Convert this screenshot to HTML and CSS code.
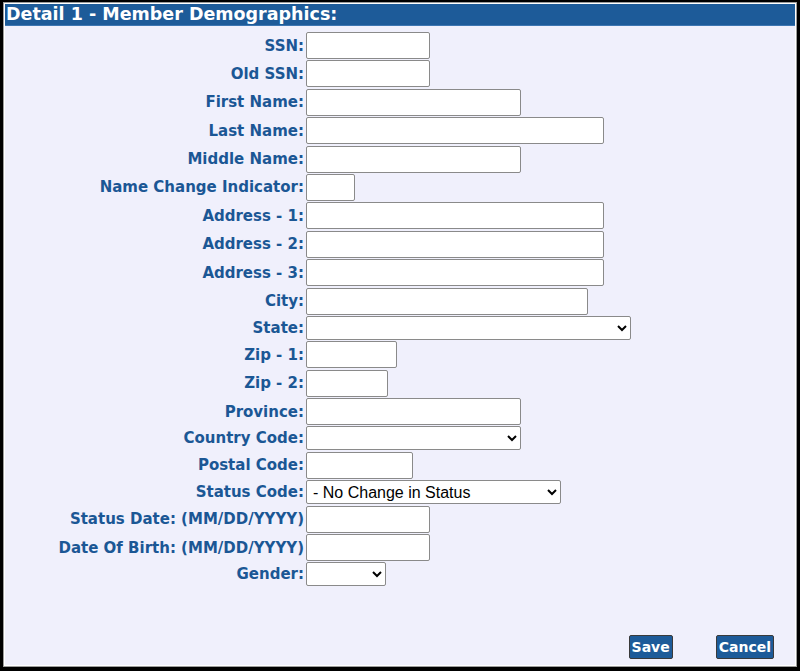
FILE: index.html
```html
<!DOCTYPE html>
<html>
<head>
<meta charset="utf-8">
<link rel="stylesheet" href="styles.css">
</head>
<body>
<div class="window">
  <div class="inner">
    <div class="header">Detail 1 - Member Demographics:</div>
    <div class="content">
      <form class="form">
        <label class="lbl">SSN:</label><div class="fld"><input class="txt w124" type="text"></div>
        <label class="lbl">Old SSN:</label><div class="fld"><input class="txt w124" type="text"></div>
        <label class="lbl">First Name:</label><div class="fld"><input class="txt w215" type="text"></div>
        <label class="lbl">Last Name:</label><div class="fld"><input class="txt w298" type="text"></div>
        <label class="lbl">Middle Name:</label><div class="fld"><input class="txt w215" type="text"></div>
        <label class="lbl">Name Change Indicator:</label><div class="fld"><input class="txt w49" type="text"></div>
        <label class="lbl">Address - 1:</label><div class="fld"><input class="txt w298" type="text"></div>
        <label class="lbl">Address - 2:</label><div class="fld"><input class="txt w298" type="text"></div>
        <label class="lbl">Address - 3:</label><div class="fld"><input class="txt w298" type="text"></div>
        <label class="lbl">City:</label><div class="fld"><input class="txt w282" type="text"></div>
        <label class="lbl">State:</label><div class="fld"><select class="sel w325"><option></option></select></div>
        <label class="lbl">Zip - 1:</label><div class="fld"><input class="txt w91" type="text"></div>
        <label class="lbl">Zip - 2:</label><div class="fld"><input class="txt w82" type="text"></div>
        <label class="lbl">Province:</label><div class="fld"><input class="txt w215" type="text"></div>
        <label class="lbl">Country Code:</label><div class="fld"><select class="sel w215"><option></option></select></div>
        <label class="lbl">Postal Code:</label><div class="fld"><input class="txt w107" type="text"></div>
        <label class="lbl">Status Code:</label><div class="fld"><select class="sel w255"><option>- No Change in Status</option></select></div>
        <label class="lbl">Status Date: (MM/DD/YYYY)</label><div class="fld"><input class="txt w124" type="text"></div>
        <label class="lbl">Date Of Birth: (MM/DD/YYYY)</label><div class="fld"><input class="txt w124" type="text"></div>
        <label class="lbl">Gender:</label><div class="fld"><select class="sel w80"><option></option></select></div>
      </form>
      <div class="actions">
        <button class="btn" type="button">Save</button>
        <button class="btn" type="button">Cancel</button>
      </div>
    </div>
  </div>
</div>
</body>
</html>
```

FILE: styles.css
```css
html, body {
  margin: 0;
  padding: 0;
  background: #000;
  height: 100%;
}
body {
  display: flex;
  flex-direction: column;
  padding: 2px 3px 4px 3px;
  box-sizing: border-box;
}
.window {
  flex: 1;
  display: flex;
  border: 1px solid #9c9c9c;
}
.inner {
  flex: 1;
  display: flex;
  flex-direction: column;
  border: 1px solid #ffffff;
  background: #f0f0fc;
}
.header {
  height: 21px;
  line-height: 21px;
  background: #1d5b99;
  border-bottom: 1px solid #3d76b2;
  color: #fff;
  font-family: "DejaVu Sans", Verdana, sans-serif;
  font-weight: bold;
  font-size: 17.5px;
  padding-left: 1px;
  white-space: nowrap;
  overflow: hidden;
}
.content {
  flex: 1;
  display: flex;
  flex-direction: column;
  padding-top: 6px;
}
.form {
  display: grid;
  grid-template-columns: 301px auto;
  row-gap: 1.4px;
  align-items: center;
  margin: 0;
}
.lbl {
  text-align: right;
  padding-right: 2px;
  font-family: "DejaVu Sans", Verdana, sans-serif;
  font-weight: bold;
  font-size: 15px;
  color: #1b5795;
  white-space: nowrap;
}
.fld {
  display: flex;
  align-items: center;
}
.txt {
  box-sizing: border-box;
  height: 27px;
  margin: 0;
  border: 1px solid #8a8a8a;
  border-radius: 2px;
  background: #fff;
  font-family: "Liberation Sans", Arial, sans-serif;
  font-size: 15px;
  padding: 1px 3px;
}
.sel {
  box-sizing: border-box;
  height: 24px;
  margin: 0;
  border: 1px solid #8a8a8a;
  border-radius: 2px;
  background: #fff;
  color: #000;
  font-family: "Liberation Sans", Arial, sans-serif;
  font-size: 16px;
  padding: 0 2px;
}
.w49 { width: 49px; }
.w80 { width: 80px; }
.w82 { width: 82px; }
.w91 { width: 91px; }
.w107 { width: 107px; }
.w124 { width: 124px; }
.w215 { width: 215px; }
.w255 { width: 255px; }
.w282 { width: 282px; }
.w298 { width: 298px; }
.w325 { width: 325px; }
.actions {
  margin-top: auto;
  display: flex;
  justify-content: flex-end;
  gap: 43px;
  padding-right: 21px;
  padding-bottom: 6px;
}
.btn {
  box-sizing: border-box;
  height: 24px;
  margin: 0;
  padding: 0 2px;
  background: #1d5b99;
  color: #fff;
  border: 1px solid #3a3a3a;
  border-radius: 2px;
  font-family: "DejaVu Sans", Verdana, sans-serif;
  font-weight: bold;
  font-size: 14px;
  line-height: 20px;
}
```
